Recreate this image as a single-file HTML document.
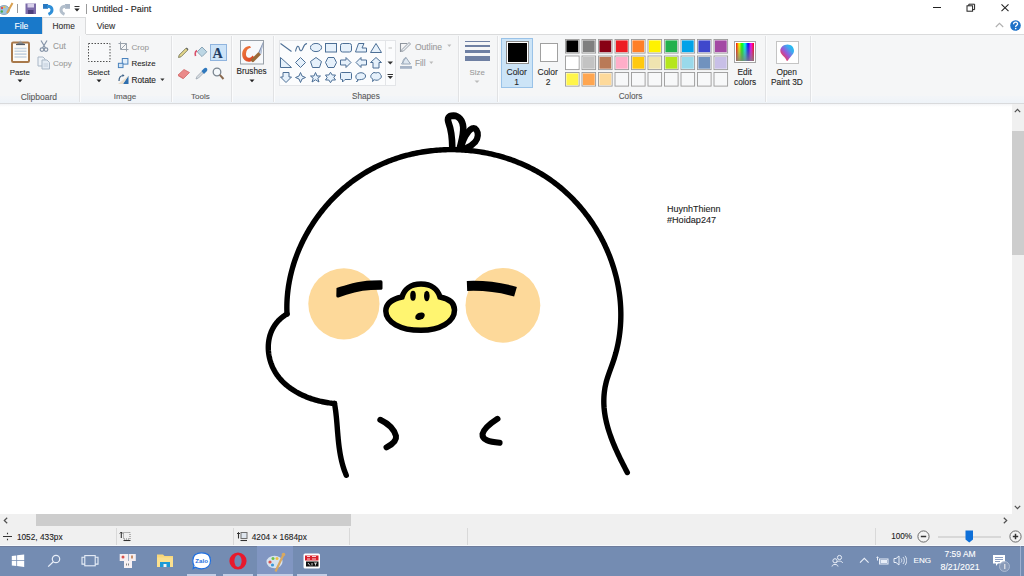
<!DOCTYPE html>
<html><head><meta charset="utf-8">
<style>
*{margin:0;padding:0;box-sizing:border-box}
html,body{width:1024px;height:576px;overflow:hidden;background:#fff;font-family:"Liberation Sans",sans-serif;color:#222}
.a{position:absolute}
.t{position:absolute;white-space:nowrap;line-height:1;-webkit-text-stroke:0.1px currentColor}
.sw{position:absolute;width:14.5px;height:14.5px;border:0.8px solid #959595;}
.sw i{position:absolute;left:0.5px;top:0.5px;right:0.5px;bottom:0.5px;display:block}
.vs{position:absolute;top:36px;width:1px;height:66px;background:#e1e2e4;box-shadow:1px 0 0 #fbfcfd}
</style></head><body>
<div class="a" style="left:0;top:0;width:1024px;height:17px;background:#fff"></div>
<div class="a" style="left:0;top:17px;width:42px;height:17px;background:#1979ca"></div>
<div class="a" style="left:42px;top:17px;width:44px;height:18px;background:#f5f6f7;border:1px solid #dadbdc;border-bottom:none"></div>
<div class="a" style="left:0;top:34px;width:1024px;height:69px;background:#f5f6f7"></div>
<div class="a" style="left:86px;top:34px;width:938px;height:1px;background:#dadbdc"></div>
<div class="a" style="left:43px;top:18px;width:42px;height:17px;background:#f5f6f7"></div>
<div class="a" style="left:0;top:96px;width:1024px;height:7px;background:linear-gradient(#f3f5f8,#eef3f8)"></div>
<div class="a" style="left:0;top:103px;width:1024px;height:1px;background:#d9dadc"></div>
<div class="a" style="left:0;top:104px;width:1012px;height:3px;background:linear-gradient(#f6f7f8,#fff)"></div>
<div class="vs" style="left:79px"></div>
<div class="vs" style="left:171px"></div>
<div class="vs" style="left:231px"></div>
<div class="vs" style="left:273px"></div>
<div class="vs" style="left:458px"></div>
<div class="vs" style="left:497px"></div>
<div class="vs" style="left:765px"></div>
<div class="vs" style="left:810px"></div>
<div class="a" style="left:501px;top:38px;width:32px;height:50px;background:#cce4f7;border:1px solid #99c2e8"></div>
<div class="a" style="left:506px;top:41px;width:23px;height:23px;border:1px solid #8c8c8c;background:#fff"></div>
<div class="a" style="left:508px;top:43px;width:19px;height:19px;background:#000"></div>
<div class="a" style="left:540px;top:43px;width:18px;height:19px;border:1px solid #a0a0a0;background:#fff"></div>
<svg class="a" style="left:565px;top:39.3px" width="170" height="50" viewBox="0 0 170 50"><rect x="0.50" y="0.50" width="13.6" height="13.6" fill="#fff" stroke="#9a9a9a" stroke-width="0.9"/><rect x="1.40" y="1.40" width="11.8" height="11.8" fill="#000000"/><rect x="17.00" y="0.50" width="13.6" height="13.6" fill="#fff" stroke="#9a9a9a" stroke-width="0.9"/><rect x="17.90" y="1.40" width="11.8" height="11.8" fill="#7f7f7f"/><rect x="33.50" y="0.50" width="13.6" height="13.6" fill="#fff" stroke="#9a9a9a" stroke-width="0.9"/><rect x="34.40" y="1.40" width="11.8" height="11.8" fill="#880015"/><rect x="50.00" y="0.50" width="13.6" height="13.6" fill="#fff" stroke="#9a9a9a" stroke-width="0.9"/><rect x="50.90" y="1.40" width="11.8" height="11.8" fill="#ed1c24"/><rect x="66.50" y="0.50" width="13.6" height="13.6" fill="#fff" stroke="#9a9a9a" stroke-width="0.9"/><rect x="67.40" y="1.40" width="11.8" height="11.8" fill="#ff7f27"/><rect x="83.00" y="0.50" width="13.6" height="13.6" fill="#fff" stroke="#9a9a9a" stroke-width="0.9"/><rect x="83.90" y="1.40" width="11.8" height="11.8" fill="#fff200"/><rect x="99.50" y="0.50" width="13.6" height="13.6" fill="#fff" stroke="#9a9a9a" stroke-width="0.9"/><rect x="100.40" y="1.40" width="11.8" height="11.8" fill="#22b14c"/><rect x="116.00" y="0.50" width="13.6" height="13.6" fill="#fff" stroke="#9a9a9a" stroke-width="0.9"/><rect x="116.90" y="1.40" width="11.8" height="11.8" fill="#00a2e8"/><rect x="132.50" y="0.50" width="13.6" height="13.6" fill="#fff" stroke="#9a9a9a" stroke-width="0.9"/><rect x="133.40" y="1.40" width="11.8" height="11.8" fill="#3f48cc"/><rect x="149.00" y="0.50" width="13.6" height="13.6" fill="#fff" stroke="#9a9a9a" stroke-width="0.9"/><rect x="149.90" y="1.40" width="11.8" height="11.8" fill="#a349a4"/><rect x="0.50" y="17.00" width="13.6" height="13.6" fill="#fff" stroke="#9a9a9a" stroke-width="0.9"/><rect x="1.40" y="17.90" width="11.8" height="11.8" fill="#ffffff"/><rect x="17.00" y="17.00" width="13.6" height="13.6" fill="#fff" stroke="#9a9a9a" stroke-width="0.9"/><rect x="17.90" y="17.90" width="11.8" height="11.8" fill="#c3c3c3"/><rect x="33.50" y="17.00" width="13.6" height="13.6" fill="#fff" stroke="#9a9a9a" stroke-width="0.9"/><rect x="34.40" y="17.90" width="11.8" height="11.8" fill="#b97a57"/><rect x="50.00" y="17.00" width="13.6" height="13.6" fill="#fff" stroke="#9a9a9a" stroke-width="0.9"/><rect x="50.90" y="17.90" width="11.8" height="11.8" fill="#ffaec9"/><rect x="66.50" y="17.00" width="13.6" height="13.6" fill="#fff" stroke="#9a9a9a" stroke-width="0.9"/><rect x="67.40" y="17.90" width="11.8" height="11.8" fill="#ffc90e"/><rect x="83.00" y="17.00" width="13.6" height="13.6" fill="#fff" stroke="#9a9a9a" stroke-width="0.9"/><rect x="83.90" y="17.90" width="11.8" height="11.8" fill="#efe4b0"/><rect x="99.50" y="17.00" width="13.6" height="13.6" fill="#fff" stroke="#9a9a9a" stroke-width="0.9"/><rect x="100.40" y="17.90" width="11.8" height="11.8" fill="#b5e61d"/><rect x="116.00" y="17.00" width="13.6" height="13.6" fill="#fff" stroke="#9a9a9a" stroke-width="0.9"/><rect x="116.90" y="17.90" width="11.8" height="11.8" fill="#99d9ea"/><rect x="132.50" y="17.00" width="13.6" height="13.6" fill="#fff" stroke="#9a9a9a" stroke-width="0.9"/><rect x="133.40" y="17.90" width="11.8" height="11.8" fill="#7092be"/><rect x="149.00" y="17.00" width="13.6" height="13.6" fill="#fff" stroke="#9a9a9a" stroke-width="0.9"/><rect x="149.90" y="17.90" width="11.8" height="11.8" fill="#c8bfe7"/><rect x="0.50" y="33.50" width="13.6" height="13.6" fill="#fff" stroke="#9a9a9a" stroke-width="0.9"/><rect x="1.40" y="34.40" width="11.8" height="11.8" fill="#fff54a"/><rect x="17.00" y="33.50" width="13.6" height="13.6" fill="#fff" stroke="#9a9a9a" stroke-width="0.9"/><rect x="17.90" y="34.40" width="11.8" height="11.8" fill="#ffa650"/><rect x="33.50" y="33.50" width="13.6" height="13.6" fill="#fff" stroke="#9a9a9a" stroke-width="0.9"/><rect x="34.40" y="34.40" width="11.8" height="11.8" fill="#fdd99a"/><rect x="50.00" y="33.50" width="13.6" height="13.6" fill="#f7f8f9" stroke="#9a9a9a" stroke-width="0.9"/><rect x="66.50" y="33.50" width="13.6" height="13.6" fill="#f7f8f9" stroke="#9a9a9a" stroke-width="0.9"/><rect x="83.00" y="33.50" width="13.6" height="13.6" fill="#f7f8f9" stroke="#9a9a9a" stroke-width="0.9"/><rect x="99.50" y="33.50" width="13.6" height="13.6" fill="#f7f8f9" stroke="#9a9a9a" stroke-width="0.9"/><rect x="116.00" y="33.50" width="13.6" height="13.6" fill="#f7f8f9" stroke="#9a9a9a" stroke-width="0.9"/><rect x="132.50" y="33.50" width="13.6" height="13.6" fill="#f7f8f9" stroke="#9a9a9a" stroke-width="0.9"/><rect x="149.00" y="33.50" width="13.6" height="13.6" fill="#f7f8f9" stroke="#9a9a9a" stroke-width="0.9"/></svg>
<svg class="a" style="left:0px;top:2px;" width="14" height="13" viewBox="0 0 14 13"><ellipse cx="4" cy="8" rx="5.5" ry="4.5" fill="#9cc3de" stroke="#7d9ab3" stroke-width="0.8"/>
<circle cx="2" cy="6" r="1.2" fill="#e05050"/><circle cx="4.5" cy="5.2" r="1.1" fill="#f0c040"/><circle cx="1.8" cy="9.5" r="1.2" fill="#4aa84a"/>
<path d="M12.5 1 L7 11" stroke="#d9a050" stroke-width="2"/></svg>
<div class="a" style="left:17px;top:4px;width:1px;height:9px;background:#9a9a9a"></div>
<svg class="a" style="left:25px;top:3px;" width="12" height="11" viewBox="0 0 12 11"><rect x="0.5" y="0.5" width="10.5" height="10.5" fill="#7b6aa8"/><rect x="2.5" y="0.5" width="6.5" height="4" fill="#d8d0ea"/><rect x="3" y="7" width="5.5" height="4" fill="#4e3f7a"/></svg>
<svg class="a" style="left:42px;top:2px;" width="13" height="14" viewBox="0 0 13 14"><path d="M1 2 H6 L6 6.8 H1 Z" fill="#2a78c0"/><path d="M5 4.3 C8.5 4.3 10 6 10 8 C10 10 8.8 11.3 6.5 12.3" fill="none" stroke="#2f8fd8" stroke-width="3"/></svg>
<svg class="a" style="left:58px;top:2px;" width="13" height="14" viewBox="0 0 13 14"><path d="M12 2 H7 L7 6.8 H12 Z" fill="#a9b6c6"/><path d="M8 4.3 C4.5 4.3 3 6 3 8 C3 10 4.2 11.3 6.5 12.3" fill="none" stroke="#b3bfcc" stroke-width="3"/></svg>
<svg class="a" style="left:74px;top:6px;" width="7" height="7" viewBox="0 0 7 7"><rect x="0.5" y="0" width="5" height="1" fill="#333"/><path d="M0.3 2.5 L5.7 2.5 L3 5.5 Z" fill="#222"/></svg>
<div class="a" style="left:86px;top:4px;width:1px;height:10px;background:#9a9a9a"></div>
<div class="a" style="left:933px;top:7px;width:8px;height:1px;background:#222"></div>
<svg class="a" style="left:966px;top:3px;" width="10" height="9" viewBox="0 0 10 9"><rect x="1" y="2.8" width="5.6" height="5.4" fill="none" stroke="#222" stroke-width="1"/><path d="M2.8 2.8 V1.2 H8.6 V6.6 H6.6" fill="none" stroke="#222" stroke-width="1"/></svg>
<svg class="a" style="left:1000px;top:3px;" width="10" height="10" viewBox="0 0 10 10"><path d="M1.5 1.3 L8.5 8.2 M8.5 1.3 L1.5 8.2" stroke="#222" stroke-width="1.05"/></svg>
<svg class="a" style="left:995px;top:22px;" width="9" height="6" viewBox="0 0 9 6"><path d="M0.8 5 L4.5 1.3 L8.2 5" fill="none" stroke="#b0b0b0" stroke-width="1.1"/></svg>
<svg class="a" style="left:1010px;top:20px;" width="12" height="12" viewBox="0 0 12 12"><circle cx="5.5" cy="5.5" r="5.3" fill="#1e72c8"/><path d="M3.6 4.2 C3.6 2.8 4.4 2.2 5.6 2.2 C6.8 2.2 7.6 2.9 7.6 4 C7.6 5.2 6 5.4 5.7 6.6 L5.7 7" fill="none" stroke="#fff" stroke-width="1.3"/><circle cx="5.7" cy="8.6" r="0.8" fill="#fff"/></svg>
<svg class="a" style="left:10px;top:39px;" width="21" height="25" viewBox="0 0 21 25"><rect x="2" y="3.5" width="17" height="19.5" rx="1.2" fill="#fdfbf7" stroke="#a8794b" stroke-width="2"/>
<path d="M4.5 9.5 H16.5 M4.5 12.3 H16.5 M4.5 15.1 H16.5 M4.5 18 H16.5" stroke="#c8d5e2" stroke-width="1.6"/>
<path d="M6.5 5.3 H14.5 L11.5 2.8 H9.5 Z" fill="#8a8a8a"/><rect x="6" y="4.8" width="9" height="1.3" fill="#505a66"/><path d="M9.3 2.8 L10.5 1.5 L11.7 2.8 Z" fill="#aaa"/></svg>
<svg class="a" style="left:39px;top:40px;" width="10" height="13" viewBox="0 0 10 13"><path d="M2 0.5 L6.5 8 M8 0.5 L3.5 8" stroke="#8795a8" stroke-width="1.2"/><circle cx="3" cy="9.6" r="1.8" fill="none" stroke="#8795a8" stroke-width="1.2"/><circle cx="7" cy="9.6" r="1.8" fill="none" stroke="#8795a8" stroke-width="1.2"/></svg>
<svg class="a" style="left:37px;top:56px;" width="14" height="14" viewBox="0 0 14 14"><path d="M1 1 H6 L8 3 V10 H1 Z" fill="#eef3f8" stroke="#a9b7c6" stroke-width="1"/><path d="M5 4 H10 L12.5 6.5 V13 H5 Z" fill="#e4ecf4" stroke="#a9b7c6" stroke-width="1"/><path d="M6.5 8 H11 M6.5 10 H11" stroke="#b9c6d4" stroke-width="0.8"/></svg>
<svg class="a" style="left:87px;top:42px;" width="25" height="21" viewBox="0 0 25 21"><rect x="1.5" y="1.5" width="21.5" height="18" fill="#f8f9fa" stroke="#505050" stroke-width="1" stroke-dasharray="1.5 1.5"/></svg>
<svg class="a" style="left:17px;top:79px;" width="6" height="4" viewBox="0 0 6 4"><path d="M0.5 0.5 H5.5 L3 3.3 Z" fill="#222"/></svg>
<svg class="a" style="left:95.6px;top:79px;" width="6" height="4" viewBox="0 0 6 4"><path d="M0.5 0.5 H5.5 L3 3.3 Z" fill="#222"/></svg>
<svg class="a" style="left:248.6px;top:79.4px;" width="6" height="4" viewBox="0 0 6 4"><path d="M0.5 0.5 H5.5 L3 3.3 Z" fill="#222"/></svg>
<svg class="a" style="left:159.5px;top:77.5px;" width="5" height="4" viewBox="0 0 5 4"><path d="M0.3 0.6 H4.5 L2.4 3 Z" fill="#333"/></svg>
<svg class="a" style="left:118px;top:41px;" width="11" height="11" viewBox="0 0 11 11"><path d="M2.5 0.5 V8.5 H10.5 M0.5 2.5 H8.5 V10.5 M3 8 L8.5 2.5" fill="none" stroke="#9aa3ad" stroke-width="1"/></svg>
<svg class="a" style="left:117px;top:57px;" width="12" height="12" viewBox="0 0 12 12"><rect x="5.3" y="1.5" width="5.6" height="5.6" fill="#e3effa" stroke="#4a82bd" stroke-width="1"/><rect x="1.4" y="6.3" width="4.6" height="4.3" fill="#d5e6f6" stroke="#4a82bd" stroke-width="1"/></svg>
<svg class="a" style="left:117px;top:74px;" width="13" height="11" viewBox="0 0 13 11"><path d="M6 10 L11.5 10 L11.5 1.8 Z" fill="#2f6fae"/><path d="M1 10 L6 10 L11.5 1.8 Z" fill="#e8d8c0" opacity="0.8"/><path d="M2 7 C2 3 4 1.5 6.5 1.5" fill="none" stroke="#3b5f85" stroke-width="1.2"/><path d="M5.5 0 L7.5 1.5 L5.5 3" fill="#3b5f85"/></svg>
<svg class="a" style="left:177px;top:47px;" width="12" height="12" viewBox="0 0 12 12"><path d="M1.5 10.5 L2.2 8 L9 1.2 L10.8 3 L4 9.8 Z" fill="#e4d78a" stroke="#7a7a5a" stroke-width="0.9"/><path d="M9 1.2 L10.8 3 L11.5 2.3 L9.7 0.5 Z" fill="#555"/></svg>
<svg class="a" style="left:194px;top:46px;" width="14" height="13" viewBox="0 0 14 13"><path d="M8 1 L12.8 5.8 L8 10.6 L3.2 5.8 Z" fill="#bcd6e4" stroke="#8aa6b8" stroke-width="1"/><path d="M3 4.5 C1 5.5 1 8 1.6 10" fill="none" stroke="#d9506a" stroke-width="1.6"/></svg>
<div class="a" style="left:210px;top:44px;width:16.5px;height:16.5px;background:#cce3f8;border:1px solid #90b4de"></div>
<div class="t" style="left:212.5px;top:46.3px;font-family:'Liberation Serif',serif;font-weight:bold;font-size:14.2px;color:#1f3b63">A</div>
<svg class="a" style="left:177px;top:68px;" width="14" height="12" viewBox="0 0 14 12"><path d="M1 7 L7 1.5 L12.5 4.5 L6.5 10.5 Z" fill="#ea8a8a" stroke="#d26a6a" stroke-width="0.8"/><path d="M1 7 L6.5 10.5 L6 11 L1 8 Z" fill="#d86a6a"/></svg>
<svg class="a" style="left:195px;top:67px;" width="13" height="13" viewBox="0 0 13 13"><path d="M1 12 L2 9.5 L7 4.5 L8.5 6 L3.5 11 Z" fill="#d8dde2" stroke="#9aa5b0" stroke-width="0.8"/><path d="M6.5 4 L9 1.5 C10 0.5 11.5 0.5 12 1.5 C12.5 2.5 12.5 3.5 11.5 4.5 L9 7 Z" fill="#2f78bd"/></svg>
<svg class="a" style="left:212px;top:67px;" width="13" height="14" viewBox="0 0 13 14"><circle cx="5" cy="5" r="3.8" fill="#f4f8fb" stroke="#7a8590" stroke-width="1.3"/><path d="M7.8 7.8 L11.5 12" stroke="#8a6a50" stroke-width="2"/></svg>
<svg class="a" style="left:240px;top:40px;" width="25" height="25" viewBox="0 0 25 25"><rect x="0.5" y="0.5" width="23" height="23.5" fill="#f7f9fb" stroke="#98a0a8" stroke-width="1"/>
<defs><linearGradient id="br" x1="0" y1="0" x2="1" y2="1"><stop offset="0" stop-color="#f08040"/><stop offset="1" stop-color="#d83a20"/></linearGradient></defs>
<path d="M10 6 C5 6 1.8 10 2.2 15 C2.6 19.5 6 22.5 10.5 21.5 C12.5 21 14 19.5 15 18 L12.5 15.5 C11.5 17 10 18 8.5 17.8 C6.5 17.5 5.8 15.5 6 13.5 C6.3 10 8.5 8 11 7.8 Z" fill="url(#br)"/>
<path d="M11 19.5 L18.5 12 L21 14.5 L13.5 22 C12.5 22.5 11 21.5 11 19.5 Z" fill="#9a6a38"/>
<path d="M18.5 12 L23 2 L23.3 2.5 L21 14.5 Z" fill="#7f8fae"/><path d="M19.5 12.8 L23 3 L21 14.5 Z" fill="#c0cce0"/></svg>
<div class="a" style="left:279px;top:40px;width:117px;height:46px;background:#fbfcfd;border:1px solid #e3e5e8"></div>
<div class="a" style="left:385px;top:40px;width:1px;height:46px;background:#e3e5e8"></div>
<svg class="a" style="left:280px;top:43px;" width="13" height="12" viewBox="0 0 13 12"><path d="M0.5 0.5 L11.5 8.5" stroke="#4c6f96" stroke-width="1.1"/></svg>
<svg class="a" style="left:295px;top:43px;" width="13" height="12" viewBox="0 0 13 12"><path d="M0.5 8.5 C2 2 3.5 2 4.5 6 C5.5 9 7 8 8 5 C9 2 10 1 12 0.5" fill="none" stroke="#4c6f96" stroke-width="1.1"/></svg>
<svg class="a" style="left:310px;top:43px;" width="13" height="12" viewBox="0 0 13 12"><ellipse cx="6" cy="4.5" rx="5.6" ry="4.1" fill="#e6f1fb" stroke="#4c6f96" stroke-width="1"/></svg>
<svg class="a" style="left:325px;top:43px;" width="13" height="12" viewBox="0 0 13 12"><rect x="0.5" y="0.5" width="11" height="8.5" fill="#e6f1fb" stroke="#4c6f96" stroke-width="1"/></svg>
<svg class="a" style="left:340px;top:43px;" width="13" height="12" viewBox="0 0 13 12"><rect x="0.5" y="0.5" width="11" height="8.5" rx="2" fill="#e6f1fb" stroke="#4c6f96" stroke-width="1"/></svg>
<svg class="a" style="left:355px;top:43px;" width="13" height="12" viewBox="0 0 13 12"><path d="M3.5 0.5 H9 L7 5 H11.5 V9 H0.5 Z" fill="#e6f1fb" stroke="#4c6f96" stroke-width="1"/></svg>
<svg class="a" style="left:370px;top:43px;" width="13" height="12" viewBox="0 0 13 12"><path d="M6 0.5 L11.5 9.5 H0.5 Z" fill="#e6f1fb" stroke="#4c6f96" stroke-width="1"/></svg>
<svg class="a" style="left:280px;top:57px;" width="13" height="12" viewBox="0 0 13 12"><path d="M0.5 0.5 V10.5 H11.5 Z" fill="#e6f1fb" stroke="#4c6f96" stroke-width="1"/></svg>
<svg class="a" style="left:295px;top:57px;" width="13" height="12" viewBox="0 0 13 12"><path d="M5.5 0.5 L10.5 5.5 L5.5 10.5 L0.5 5.5 Z" fill="#e6f1fb" stroke="#4c6f96" stroke-width="1"/></svg>
<svg class="a" style="left:310px;top:57px;" width="13" height="12" viewBox="0 0 13 12"><path d="M6 0.5 L11.5 4.5 L9.5 10.5 H2.5 L0.5 4.5 Z" fill="#e6f1fb" stroke="#4c6f96" stroke-width="1"/></svg>
<svg class="a" style="left:325px;top:57px;" width="13" height="12" viewBox="0 0 13 12"><path d="M3 0.5 H9 L11.5 5.5 L9 10.5 H3 L0.5 5.5 Z" fill="#e6f1fb" stroke="#4c6f96" stroke-width="1"/></svg>
<svg class="a" style="left:340px;top:57px;" width="13" height="12" viewBox="0 0 13 12"><path d="M0.5 3 H6 V0.5 L11 5.5 L6 10.5 V8 H0.5 Z" fill="#e6f1fb" stroke="#4c6f96" stroke-width="1"/></svg>
<svg class="a" style="left:355px;top:57px;" width="13" height="12" viewBox="0 0 13 12"><path d="M11.5 3 H6 V0.5 L1 5.5 L6 10.5 V8 H11.5 Z" fill="#e6f1fb" stroke="#4c6f96" stroke-width="1"/></svg>
<svg class="a" style="left:370px;top:57px;" width="13" height="12" viewBox="0 0 13 12"><path d="M3 11 V5.5 H0.5 L6 0.5 L11.5 5.5 H9 V11 Z" fill="#e6f1fb" stroke="#4c6f96" stroke-width="1"/></svg>
<svg class="a" style="left:280px;top:72px;" width="13" height="12" viewBox="0 0 13 12"><path d="M3 0.5 V5 H0.5 L6 10.5 L11.5 5 H9 V0.5 Z" fill="#e6f1fb" stroke="#4c6f96" stroke-width="1"/></svg>
<svg class="a" style="left:295px;top:72px;" width="13" height="12" viewBox="0 0 13 12"><path d="M5.5 0.5 L7 4 L10.5 5.5 L7 7 L5.5 10.5 L4 7 L0.5 5.5 L4 4 Z" fill="#e6f1fb" stroke="#4c6f96" stroke-width="1"/></svg>
<svg class="a" style="left:310px;top:72px;" width="13" height="12" viewBox="0 0 13 12"><path d="M5.5 0.5 L7 4 L10.5 4 L7.8 6.3 L9 10 L5.5 7.8 L2 10 L3.2 6.3 L0.5 4 L4 4 Z" fill="#e6f1fb" stroke="#4c6f96" stroke-width="1"/></svg>
<svg class="a" style="left:325px;top:72px;" width="13" height="12" viewBox="0 0 13 12"><path d="M5.5 0.3 L7.2 3 L10.5 3 L8.8 5.5 L10.5 8 L7.2 8 L5.5 10.7 L3.8 8 L0.5 8 L2.2 5.5 L0.5 3 L3.8 3 Z" fill="#e6f1fb" stroke="#4c6f96" stroke-width="1"/></svg>
<svg class="a" style="left:340px;top:72px;" width="13" height="12" viewBox="0 0 13 12"><path d="M1.5 0.5 H10.5 Q11.5 0.5 11.5 1.5 V6.5 Q11.5 7.5 10.5 7.5 H5 L2.5 10 V7.5 H1.5 Q0.5 7.5 0.5 6.5 V1.5 Q0.5 0.5 1.5 0.5 Z" fill="#e6f1fb" stroke="#4c6f96" stroke-width="1"/></svg>
<svg class="a" style="left:355px;top:72px;" width="13" height="12" viewBox="0 0 13 12"><path d="M3 8 C-0.5 6.5 0 1 6 0.7 C12 1 12 7 6.5 7.5 C5 7.7 4 7.8 3 7.8 L1.5 10 Z" fill="#e6f1fb" stroke="#4c6f96" stroke-width="1"/></svg>
<svg class="a" style="left:370px;top:72px;" width="13" height="12" viewBox="0 0 13 12"><path d="M2 2 C3 0 5 0.5 6 1 C8 0 10 0.5 10.5 2.5 C12 4 11.5 6.5 9.5 7 C8.5 8.5 6 8.5 4.5 7.8 L2.5 9.5 L3 7 C0.5 6.5 0 3.5 2 2 Z" fill="#e6f1fb" stroke="#4c6f96" stroke-width="1"/></svg>
<svg class="a" style="left:387px;top:46px;" width="7" height="4" viewBox="0 0 7 4"><rect x="1.5" y="1.5" width="3.5" height="1" fill="#c0c0c0"/></svg>
<svg class="a" style="left:387px;top:61px;" width="7" height="4" viewBox="0 0 7 4"><path d="M0.5 0.5 H6 L3.25 3.5 Z" fill="#333"/></svg>
<svg class="a" style="left:387px;top:74px;" width="7" height="6" viewBox="0 0 7 6"><rect x="0.5" y="0" width="5.5" height="1" fill="#333"/><path d="M0.5 2 H6 L3.25 5 Z" fill="#333"/></svg>
<svg class="a" style="left:399px;top:41px;" width="14" height="13" viewBox="0 0 14 13"><path d="M1.5 11 V2.5 H8" fill="none" stroke="#8e959e" stroke-width="1.1"/><path d="M2.5 10.5 L3 8.5 L10 1.5 L11.5 3 L4.5 10 Z" fill="#e8edf2" stroke="#8e959e" stroke-width="0.9"/></svg>
<svg class="a" style="left:399px;top:56px;" width="14" height="14" viewBox="0 0 14 14"><path d="M7 1.5 L11.5 8 H2.5 Z" fill="#dfe8f1" stroke="#9aa8b8" stroke-width="1"/><path d="M4.5 7.5 C3 5 5 2 7 1.5" fill="none" stroke="#9aa8b8" stroke-width="1"/><rect x="1" y="10" width="12" height="2.8" fill="#a7b4c6"/></svg>
<svg class="a" style="left:447px;top:44px;" width="5" height="4" viewBox="0 0 5 4"><path d="M0.3 0.5 H4.3 L2.3 3 Z" fill="#bbb"/></svg>
<svg class="a" style="left:429px;top:61px;" width="5" height="4" viewBox="0 0 5 4"><path d="M0.3 0.5 H4.3 L2.3 3 Z" fill="#bbb"/></svg>
<svg class="a" style="left:474px;top:80px;" width="6" height="4" viewBox="0 0 6 4"><path d="M0.5 0.5 H5.5 L3 3 Z" fill="#bbb"/></svg>
<div class="a" style="left:465px;top:41px;width:24.5px;height:1px;background:#6f80a3"></div>
<div class="a" style="left:465px;top:45px;width:24.5px;height:1.5px;background:#6f80a3"></div>
<div class="a" style="left:465px;top:50.3px;width:24.5px;height:2.6px;background:#6f80a3"></div>
<div class="a" style="left:465px;top:56px;width:24.5px;height:5.3px;background:#6f80a3"></div>
<div class="a" style="left:734px;top:41px;width:21.5px;height:21.5px;border:1px solid #a4a4a4;background:#fff;padding:0.8px"><div style="width:100%;height:100%;background:linear-gradient(to bottom,rgba(128,128,128,0) 0%,rgba(128,128,128,0.85) 100%),linear-gradient(to right,#f00 0%,#ff0 17%,#0f0 33%,#0ff 50%,#00f 67%,#f0f 83%,#f00 100%)"></div></div>
<div class="a" style="left:776px;top:41px;width:22.5px;height:22.5px;border:1px solid #c4c4c4;background:#fff"></div>
<svg class="a" style="left:779px;top:44px;" width="17" height="18" viewBox="0 0 17 18"><defs><linearGradient id="p3" x1="1" y1="0" x2="0" y2="1"><stop offset="0" stop-color="#10d0f0"/><stop offset="0.3" stop-color="#40a8f0"/><stop offset="0.55" stop-color="#9a58d8"/><stop offset="0.8" stop-color="#f03a5a"/><stop offset="1" stop-color="#ffb020"/></linearGradient></defs>
<path d="M8.5 0.5 C12.5 0.5 15 3.4 15 6.8 C15 10.5 11.5 12 8.8 16.8 L7.6 16.8 C7 13 1.3 11 1.3 6.8 C1.3 3.4 4.5 0.5 8.5 0.5 Z" fill="url(#p3)"/></svg>
<div class="a" style="left:0;top:104px;width:1012px;height:410px;background:linear-gradient(#f4f5f7 0px,#fff 3px)"></div>
<div class="a" style="left:0;top:0;width:1012px;height:514px;overflow:hidden"><svg class="a" style="left:0;top:0" width="1024" height="576" viewBox="0 0 1024 576">
<circle cx="343.9" cy="303.8" r="35.6" fill="#fdd99a"/>
<circle cx="502.9" cy="305.3" r="37.4" fill="#fdd99a"/>
<g fill="none" stroke="#000" stroke-width="5.4" stroke-linecap="round" stroke-linejoin="round">
<path d="M 287.00 314.00 L 286.93 312.19 L 286.88 310.38 L 286.85 308.57 L 286.85 306.77 L 286.88 304.96 L 286.93 303.16 L 287.00 301.35 L 287.09 299.55 L 287.21 297.75 L 287.35 295.95 L 287.51 294.16 L 287.69 292.36 L 287.90 290.57 L 288.13 288.79 L 288.39 287.00 L 288.66 285.22 L 288.96 283.44 L 289.27 281.66 L 289.61 279.89 L 289.98 278.13 L 290.36 276.36 L 290.76 274.60 L 291.19 272.85 L 291.63 271.10 L 292.10 269.35 L 292.59 267.61 L 293.10 265.88 L 293.62 264.15 L 294.17 262.43 L 294.74 260.71 L 295.33 259.00 L 295.94 257.29 L 296.56 255.60 L 297.21 253.90 L 297.88 252.22 L 298.56 250.54 L 299.27 248.87 L 299.99 247.21 L 300.74 245.55 L 301.50 243.91 L 302.28 242.27 L 303.07 240.64 L 303.89 239.01 L 304.72 237.40 L 305.58 235.79 L 306.45 234.20 L 307.33 232.61 L 308.24 231.03 L 309.16 229.47 L 310.10 227.91 L 311.06 226.36 L 312.03 224.82 L 313.02 223.30 L 314.02 221.78 L 315.05 220.27 L 316.09 218.78 L 317.14 217.30 L 318.21 215.82 L 319.30 214.36 L 320.40 212.92 L 321.52 211.48 L 322.66 210.05 L 323.80 208.64 L 324.97 207.24 L 326.15 205.86 L 327.34 204.48 L 328.55 203.12 L 329.77 201.78 L 331.01 200.44 L 332.26 199.12 L 333.53 197.82 L 334.81 196.53 L 336.11 195.25 L 337.41 193.99 L 338.73 192.74 L 340.07 191.50 L 341.42 190.29 L 342.78 189.08 L 344.15 187.90 L 345.54 186.73 L 346.94 185.57 L 348.35 184.43 L 349.77 183.31 L 351.21 182.20 L 352.66 181.11 L 354.12 180.04 L 355.59 178.99 L 357.08 177.95 L 358.57 176.93 L 360.08 175.93 L 361.60 174.94 L 363.13 173.97 L 364.67 173.03 L 366.22 172.10 L 367.78 171.18 L 369.35 170.29 L 370.94 169.42 L 372.53 168.56 L 374.13 167.73 L 375.75 166.91 L 377.37 166.12 L 379.00 165.34 L 380.64 164.58 L 382.29 163.84 L 383.95 163.12 L 385.61 162.42 L 387.29 161.73 L 388.97 161.07 L 390.66 160.42 L 392.36 159.80 L 394.06 159.19 L 395.77 158.60 L 397.49 158.03 L 399.22 157.48 L 400.95 156.95 L 402.69 156.43 L 404.44 155.94 L 406.19 155.46 L 407.94 155.01 L 409.70 154.57 L 411.47 154.15 L 413.24 153.75 L 415.02 153.37 L 416.80 153.00 L 418.58 152.66 L 420.37 152.33 L 422.17 152.02 L 423.96 151.73 L 425.76 151.46 L 427.57 151.21 L 429.37 150.98 L 431.18 150.76 L 432.99 150.57 L 434.81 150.39 L 436.62 150.23 L 438.44 150.09 L 440.26 149.97 L 442.08 149.86 L 443.91 149.78 L 445.73 149.71 L 447.55 149.66 L 449.38 149.63 L 451.20 149.62 L 453.03 149.63 L 454.86 149.65 L 456.68 149.70 L 458.51 149.76 L 460.33 149.84 L 462.15 149.94 L 463.98 150.05 L 465.80 150.19 L 467.62 150.34 L 469.44 150.51 L 471.25 150.70 L 473.06 150.91 L 474.88 151.13 L 476.68 151.38 L 478.49 151.64 L 480.29 151.92 L 482.09 152.22 L 483.89 152.53 L 485.68 152.87 L 487.47 153.22 L 489.25 153.59 L 491.03 153.98 L 492.81 154.38 L 494.58 154.81 L 496.34 155.25 L 498.10 155.71 L 499.86 156.19 L 501.61 156.68 L 503.35 157.20 L 505.09 157.73 L 506.82 158.28 L 508.54 158.85 L 510.26 159.43 L 511.97 160.04 L 513.67 160.66 L 515.37 161.30 L 517.06 161.95 L 518.74 162.63 L 520.41 163.32 L 522.07 164.03 L 523.73 164.76 L 525.38 165.50 L 527.01 166.26 L 528.64 167.04 L 530.26 167.84 L 531.87 168.66 L 533.47 169.49 L 535.06 170.34 L 536.64 171.21 L 538.21 172.10 L 539.77 173.00 L 541.32 173.92 L 542.86 174.86 L 544.38 175.82 L 545.90 176.79 L 547.40 177.78 L 548.89 178.79 L 550.37 179.81 L 551.83 180.86 L 553.29 181.92 L 554.73 182.99 L 556.16 184.09 L 557.58 185.20 L 558.98 186.32 L 560.37 187.46 L 561.75 188.62 L 563.11 189.79 L 564.47 190.98 L 565.81 192.18 L 567.13 193.40 L 568.44 194.64 L 569.74 195.88 L 571.03 197.14 L 572.30 198.42 L 573.55 199.71 L 574.80 201.02 L 576.03 202.33 L 577.24 203.67 L 578.44 205.01 L 579.63 206.37 L 580.80 207.74 L 581.96 209.12 L 583.10 210.52 L 584.23 211.93 L 585.34 213.35 L 586.44 214.78 L 587.52 216.22 L 588.59 217.68 L 589.64 219.15 L 590.68 220.62 L 591.70 222.11 L 592.71 223.61 L 593.70 225.12 L 594.67 226.65 L 595.63 228.18 L 596.57 229.72 L 597.50 231.27 L 598.41 232.83 L 599.30 234.40 L 600.18 235.98 L 601.04 237.57 L 601.88 239.17 L 602.71 240.78 L 603.51 242.39 L 604.31 244.01 L 605.08 245.65 L 605.84 247.29 L 606.58 248.93 L 607.30 250.59 L 608.01 252.25 L 608.70 253.92 L 609.37 255.60 L 610.02 257.28 L 610.66 258.97 L 611.27 260.67 L 611.87 262.37 L 612.45 264.08 L 613.01 265.80 L 613.56 267.52 L 614.08 269.24 L 614.59 270.97 L 615.07 272.71 L 615.54 274.45 L 615.99 276.20 L 616.42 277.95 L 616.83 279.70 L 617.22 281.46 L 617.59 283.23 L 617.95 284.99 L 618.28 286.76 L 618.59 288.54 L 618.88 290.32 L 619.16 292.10 L 619.41 293.88 L 619.64 295.67 L 619.86 297.45 L 620.05 299.25 L 620.22 301.04 L 620.37 302.83 L 620.50 304.63 L 620.61 306.43 L 620.70 308.23 L 620.76 310.03 L 620.81 311.83 L 620.84 313.63 L 620.84 315.43 L 620.82 317.24 L 620.78 319.04 L 620.72 320.84 L 620.64 322.65 L 620.53 324.45 L 620.41 326.25 L 620.26 328.05 L 620.09 329.85 L 619.89 331.65 L 619.68 333.45 L 619.44 335.25 L 619.18 337.04 L 618.90 338.83 L 618.59 340.62 L 618.26 342.41 L 617.91 344.20 L 617.53 345.98 L 617.13 347.76 L 616.71 349.54 L 616.26 351.32 L 615.80 353.09 L 615.30 354.85 L 614.79 356.62 L 614.25 358.38 L 613.68 360.13 L 613.09 361.88 L 612.48 363.63 L 611.86 365.37 L 611.23 367.12 L 610.59 368.86 L 609.96 370.59 L 609.33 372.33 L 608.72 374.07 L 608.12 375.82 L 607.55 377.56 L 607.02 379.31 L 606.51 381.06 L 606.05 382.81 L 605.64 384.57 L 605.26 386.34 L 604.93 388.11 L 604.65 389.88 L 604.41 391.65 L 604.21 393.43 L 604.05 395.22 L 603.93 397.00 L 603.86 398.79 L 603.82 400.58 L 603.83 402.37 L 603.87 404.16 L 603.96 405.96 L 604.08 407.75 L 604.25 409.55 L 604.45 411.34 L 604.69 413.14 L 604.96 414.93 L 605.27 416.72 L 605.61 418.51 L 605.99 420.30 L 606.40 422.09 L 606.83 423.87 L 607.30 425.65 L 607.79 427.43 L 608.31 429.20 L 608.86 430.97 L 609.43 432.73 L 610.02 434.49 L 610.64 436.24 L 611.27 437.99 L 611.93 439.73 L 612.60 441.46 L 613.29 443.19 L 614.00 444.90 L 614.72 446.61 L 615.46 448.31 L 616.20 450.00 L 616.96 451.69 L 617.73 453.36 L 618.51 455.02 L 619.29 456.67 L 620.08 458.31 L 620.88 459.94 L 621.68 461.56 L 622.48 463.16 L 623.29 464.75 L 624.10 466.33 L 624.90 467.89 L 625.70 469.44 L 626.50 470.98 L 627.30 472.50"/>
<path d="M 287.00 314.00 L 285.70 314.78 L 284.44 315.60 L 283.24 316.46 L 282.08 317.34 L 280.98 318.26 L 279.92 319.21 L 278.91 320.19 L 277.95 321.20 L 277.04 322.24 L 276.18 323.30 L 275.36 324.39 L 274.59 325.50 L 273.87 326.63 L 273.19 327.79 L 272.56 328.97 L 271.97 330.16 L 271.43 331.37 L 270.93 332.60 L 270.48 333.85 L 270.07 335.11 L 269.70 336.38 L 269.38 337.66 L 269.10 338.96 L 268.86 340.27 L 268.66 341.58 L 268.51 342.90 L 268.39 344.23 L 268.32 345.56 L 268.29 346.90 L 268.29 348.23 L 268.34 349.57 L 268.42 350.92 L 268.55 352.25 L 268.71 353.59 L 268.91 354.93 L 269.15 356.26 L 269.43 357.58 L 269.74 358.90 L 270.09 360.21 L 270.47 361.51 L 270.89 362.79 L 271.35 364.07 L 271.84 365.34 L 272.36 366.59 L 272.92 367.83 L 273.52 369.05 L 274.15 370.25 L 274.81 371.43 L 275.50 372.60 L 276.22 373.74 L 276.98 374.86 L 277.77 375.96 L 278.59 377.04 L 279.44 378.09 L 280.31 379.12 L 281.22 380.13 L 282.15 381.12 L 283.11 382.09 L 284.09 383.03 L 285.10 383.95 L 286.13 384.85 L 287.18 385.73 L 288.26 386.59 L 289.36 387.42 L 290.47 388.24 L 291.61 389.03 L 292.77 389.80 L 293.94 390.55 L 295.13 391.28 L 296.33 391.99 L 297.56 392.67 L 298.79 393.33 L 300.04 393.98 L 301.30 394.60 L 302.58 395.20 L 303.86 395.78 L 305.15 396.34 L 306.46 396.88 L 307.77 397.40 L 309.09 397.90 L 310.42 398.37 L 311.75 398.83 L 313.09 399.26 L 314.43 399.68 L 315.78 400.07 L 317.12 400.45 L 318.47 400.80 L 319.82 401.14 L 321.18 401.45 L 322.53 401.75 L 323.87 402.02 L 325.22 402.27 L 326.56 402.51 L 327.90 402.72 L 329.23 402.92 L 330.56 403.09 L 331.88 403.25 L 333.20 403.38 L 334.50 403.50"/>
<path d="M 334.50 403.50 L 334.76 404.94 L 334.99 406.38 L 335.22 407.82 L 335.42 409.27 L 335.62 410.73 L 335.80 412.19 L 335.98 413.65 L 336.14 415.12 L 336.29 416.59 L 336.44 418.06 L 336.58 419.54 L 336.71 421.02 L 336.84 422.50 L 336.97 423.98 L 337.09 425.46 L 337.21 426.95 L 337.32 428.44 L 337.44 429.92 L 337.56 431.41 L 337.68 432.90 L 337.81 434.39 L 337.93 435.88 L 338.07 437.37 L 338.20 438.86 L 338.35 440.35 L 338.50 441.83 L 338.67 443.32 L 338.84 444.80 L 339.02 446.28 L 339.21 447.77 L 339.42 449.24 L 339.64 450.72 L 339.87 452.19 L 340.12 453.66 L 340.38 455.13 L 340.66 456.59 L 340.96 458.05 L 341.28 459.51 L 341.61 460.96 L 341.97 462.41 L 342.35 463.85 L 342.75 465.29 L 343.17 466.72 L 343.62 468.15 L 344.09 469.57 L 344.59 470.99 L 345.12 472.40 L 345.67 473.80 L 346.25 475.20"/>
<path d="M 380.3 419.8 C 387 423 394 429 396 436 C 397 441 391 445 386.5 447.4" stroke-width="6"/>
<path d="M 497.5 418.8 C 491 423 484 428 482.5 434 C 482 440 489 442 499.6 442.7" stroke-width="6"/>
<path d="M 452.3 148 C 452.2 140 451.3 130 448.8 123.5 C 446.8 118 448.5 115.6 453.5 115.6 C 458.5 115.8 462.5 120 463.2 127 C 463.8 134 461.5 141 459.8 148" stroke-width="6.6"/>
<path d="M 461.5 146 C 463 140 467 131 472 128.5 C 476 127 478 131.5 477.8 135.5 C 477.5 141 473 145 467 147.5" stroke-width="6.2"/>
</g>
<path d="M 336.5 288 C 346 285 358 281 372 280.5 L 381 280.3 Q 382.5 280.5 382.5 282 L 382.5 288.5 Q 382.3 289.8 381 289.8 L 371 290 C 360 290.5 349 293.5 338.5 297.5 Q 336.5 298 336.3 296 Z" fill="#000"/>
<path d="M 467 286 Q 492 285 515.5 291.7" stroke="#000" stroke-width="10" fill="none" stroke-linecap="butt"/>
<path d="M 421 284 C 432 284 438 290 440 297 C 450 299 454.5 304 454.5 310 C 454.5 322 440 330.3 421 330.3 C 400 330.3 386 322 385.8 311 C 386 304 392 299 402 297 C 404 290 410 284 421 284 Z" fill="#fff570" stroke="#000" stroke-width="5.5"/>
<ellipse cx="413" cy="295.7" rx="2.8" ry="5" fill="#000"/>
<ellipse cx="426.8" cy="296" rx="2.8" ry="5.2" fill="#000"/>
<ellipse cx="420" cy="316.2" rx="5" ry="3.5" fill="#000" transform="rotate(-25 420 316.2)"/>
</svg></div>
<div class="a" style="left:1012px;top:104px;width:12px;height:410px;background:#f0f0f0"></div>
<div class="a" style="left:1012px;top:131px;width:12px;height:124px;background:#cdcdcd"></div>
<div class="a" style="left:0;top:514px;width:1024px;height:12px;background:#f0f0f0"></div>
<div class="a" style="left:35.6px;top:514px;width:315.2px;height:11.6px;background:#cdcdcd"></div>
<div class="a" style="left:0;top:526px;width:1024px;height:20px;background:#f0f0f0"></div>
<div class="a" style="left:116px;top:528px;width:1px;height:17px;background:#d9d9d9"></div>
<div class="a" style="left:233px;top:528px;width:1px;height:17px;background:#d9d9d9"></div>
<div class="a" style="left:349px;top:528px;width:1px;height:17px;background:#d9d9d9"></div>
<div class="a" style="left:467px;top:528px;width:1px;height:17px;background:#d9d9d9"></div>
<div class="a" style="left:875px;top:528px;width:1px;height:17px;background:#d9d9d9"></div>
<div class="a" style="left:0;top:546px;width:1024px;height:30px;background:#748cb2"></div>
<div class="a" style="left:0;top:545px;width:1024px;height:1px;background:#f7fafd"></div>
<div class="a" style="left:0;top:546px;width:1024px;height:1px;background:#6e7c9c"></div>
<svg class="a" style="left:1014px;top:108px;" width="7" height="5" viewBox="0 0 7 5"><path d="M0.8 4.2 L3.5 1.3 L6.2 4.2" fill="none" stroke="#505050" stroke-width="1.2"/></svg>
<svg class="a" style="left:1014px;top:505px;" width="7" height="5" viewBox="0 0 7 5"><path d="M0.8 0.8 L3.5 3.7 L6.2 0.8" fill="none" stroke="#505050" stroke-width="1.2"/></svg>
<svg class="a" style="left:3px;top:517px;" width="5" height="7" viewBox="0 0 5 7"><path d="M4.2 0.8 L1.3 3.5 L4.2 6.2" fill="none" stroke="#505050" stroke-width="1.2"/></svg>
<svg class="a" style="left:1003px;top:517px;" width="5" height="7" viewBox="0 0 5 7"><path d="M0.8 0.8 L3.7 3.5 L0.8 6.2" fill="none" stroke="#505050" stroke-width="1.2"/></svg>
<svg class="a" style="left:2px;top:532px;" width="11" height="9" viewBox="0 0 11 9"><path d="M1 4.5 H10 M5.5 0.8 V2.2 M5.5 6.8 V8.2" stroke="#333" stroke-width="1.1"/></svg>
<svg class="a" style="left:119px;top:531px;" width="13" height="11" viewBox="0 0 13 11"><path d="M2.3 1 V7" stroke="#333" stroke-width="1.1"/><path d="M0.8 2.5 L2.3 1 L3.8 2.5" fill="none" stroke="#333" stroke-width="1"/><rect x="4.5" y="1.5" width="6.5" height="6.5" fill="none" stroke="#666" stroke-width="0.9" stroke-dasharray="1 1"/><path d="M4.5 9.5 H11.5" stroke="#333" stroke-width="1.1"/></svg>
<svg class="a" style="left:236px;top:531px;" width="13" height="11" viewBox="0 0 13 11"><path d="M2.5 1.5 V7.5" stroke="#333" stroke-width="1.1"/><path d="M1 3 L2.5 1.5 L4 3" fill="none" stroke="#333" stroke-width="1"/><rect x="5" y="1.5" width="6" height="6" fill="#dfe6ee" stroke="#707070" stroke-width="1"/><path d="M4.5 9.5 H11" stroke="#333" stroke-width="1.1"/></svg>
<svg class="a" style="left:917px;top:530px;" width="13" height="13" viewBox="0 0 13 13"><circle cx="6.5" cy="6.5" r="5.6" fill="#f4f4f4" stroke="#6a6a6a" stroke-width="1"/><path d="M3.8 6.5 H9.2" stroke="#333" stroke-width="1.5"/></svg>
<div class="a" style="left:938px;top:536px;width:63px;height:1.5px;background:#d8d8d8"></div>
<svg class="a" style="left:965px;top:530px;" width="9" height="13" viewBox="0 0 9 13"><path d="M0.5 0.5 H8 V9.5 L4.25 12.5 L0.5 9.5 Z" fill="#0e6fd8"/></svg>
<svg class="a" style="left:1009px;top:530px;" width="13" height="13" viewBox="0 0 13 13"><circle cx="6.5" cy="6.5" r="5.6" fill="#f4f4f4" stroke="#6a6a6a" stroke-width="1"/><path d="M3.8 6.5 H9.2 M6.5 3.8 V9.2" stroke="#333" stroke-width="1.5"/></svg>
<div class="a" style="left:257px;top:546px;width:36px;height:30px;background:#8196c2"></div>
<div class="a" style="left:187px;top:574px;width:29px;height:2px;background:#c3cee6"></div>
<div class="a" style="left:223px;top:574px;width:30px;height:2px;background:#c3cee6"></div>
<div class="a" style="left:257px;top:574px;width:36px;height:2px;background:#c3cee6"></div>
<div class="a" style="left:297px;top:574px;width:30px;height:2px;background:#c3cee6"></div>
<div class="a" style="left:1020px;top:546px;width:1px;height:30px;background:#9fb0d0"></div>
<svg class="a" style="left:11px;top:554px;" width="14" height="14" viewBox="0 0 14 14"><path d="M0.8 2 L5.3 1.4 V6.3 H0.8 Z M6.1 1.3 L13.2 0.5 V6.3 H6.1 Z M0.8 7.1 H5.3 V12 L0.8 11.4 Z M6.1 7.1 H13.2 V12.9 L6.1 12.1 Z" fill="#fff"/></svg>
<svg class="a" style="left:47px;top:554px;" width="14" height="14" viewBox="0 0 14 14"><circle cx="9" cy="5" r="3.7" fill="none" stroke="#e8eef8" stroke-width="1.2"/><path d="M6.3 7.7 L1.2 12.6" stroke="#e8eef8" stroke-width="1.3"/></svg>
<svg class="a" style="left:81px;top:555px;" width="18" height="12" viewBox="0 0 18 12"><rect x="3.8" y="0.6" width="10.4" height="10.2" fill="none" stroke="#e8eef8" stroke-width="1.1"/><path d="M3.8 2.3 H1 V9.1 H3.8 M14.2 2.3 H17 V9.1 H14.2" fill="none" stroke="#e8eef8" stroke-width="1.1"/></svg>
<svg class="a" style="left:119px;top:553px;" width="18" height="16" viewBox="0 0 18 16"><rect x="0.7" y="1" width="8.5" height="7" fill="#f6eef0"/><circle cx="4" cy="4" r="1.5" fill="#d9534f"/><rect x="9.8" y="1" width="7" height="7" fill="#f6eef0"/><rect x="12" y="2.5" width="2" height="3" fill="#c8906a"/><rect x="5" y="8" width="8" height="7" fill="#f8f2f4"/><path d="M7.5 10.5 V12.5 M9.5 10.5 V12.5" stroke="#777" stroke-width="0.9"/></svg>
<svg class="a" style="left:156px;top:553px;" width="18" height="15" viewBox="0 0 18 15"><path d="M1 1.5 H7 L8.5 3 H17 V14 H1 Z" fill="#f9d77a"/><path d="M1 4.5 H17 V14 H1 Z" fill="#fbe08e"/><rect x="4" y="9" width="10" height="5" fill="#1d9ad6"/><rect x="7.5" y="11" width="3" height="3" fill="#f2f2f2"/></svg>
<svg class="a" style="left:192px;top:552px;" width="20" height="18" viewBox="0 0 20 18"><path d="M9.5 0.8 C15 0.8 18.5 3.5 18.5 8.5 C18.5 13.5 15 16.8 9.5 16.8 C7 16.8 5 16.3 3.5 15.3 L1.2 16.5 L2 13.5 C1 12 0.8 10.5 0.8 8.5 C0.8 3.5 4 0.8 9.5 0.8 Z" fill="#fff" stroke="#1f6fe0" stroke-width="1.2"/><text x="9.6" y="11" font-family="Liberation Sans" font-size="6.2" font-weight="bold" fill="#1f6fe0" text-anchor="middle">Zalo</text></svg>
<svg class="a" style="left:229px;top:552px;" width="18" height="18" viewBox="0 0 18 18"><ellipse cx="9" cy="9" rx="8.6" ry="8.6" fill="#e8192c"/><ellipse cx="9" cy="9" rx="3.6" ry="5.9" fill="#7088b4"/></svg>
<svg class="a" style="left:265px;top:552px;" width="22" height="22" viewBox="0 0 22 22"><ellipse cx="9.5" cy="10" rx="8" ry="6.2" fill="#dfeaf3" opacity="0.9"/><circle cx="5" cy="10" r="1.6" fill="#d9534f"/><circle cx="8" cy="6.5" r="1.5" fill="#6cc04a"/><circle cx="12" cy="6.5" r="1.5" fill="#f0c040"/><circle cx="7.5" cy="13" r="1.6" fill="#3c9ad8"/><path d="M19 1.5 L10.5 19.5" stroke="#d8a860" stroke-width="2.2"/><circle cx="18.5" cy="2.5" r="1.8" fill="#d8a860"/></svg>
<svg class="a" style="left:303px;top:553px;" width="18" height="16" viewBox="0 0 18 16"><rect x="0.5" y="0.5" width="16.5" height="15" rx="1.5" fill="#fff"/><rect x="2" y="2.5" width="13.5" height="5" fill="#d81e2a"/><rect x="3" y="8.5" width="12.5" height="5" fill="#111"/><path d="M4 3.5 H7 M9 3.5 H13 M4 6 H7 M9 6 H13" stroke="#fff" stroke-width="0.8"/><path d="M5 10 L7 12.5 M9 10 V12.5 M11 10 H14 M12.5 10 V12.5" stroke="#fff" stroke-width="0.8"/></svg>
<svg class="a" style="left:831px;top:554px;" width="13" height="13" viewBox="0 0 13 13"><circle cx="8.5" cy="3.5" r="2.1" fill="none" stroke="#e8eef8" stroke-width="1"/><path d="M5.5 9 C5.5 6.5 11.5 6.5 11.5 9" fill="none" stroke="#e8eef8" stroke-width="1"/><circle cx="4" cy="6.8" r="2.1" fill="none" stroke="#e8eef8" stroke-width="1"/><path d="M1 12.5 C1 9.8 7 9.8 7 12.5" fill="none" stroke="#e8eef8" stroke-width="1"/></svg>
<svg class="a" style="left:859px;top:557px;" width="11" height="7" viewBox="0 0 11 7"><path d="M1 5.7 L5.3 1.4 L9.6 5.7" fill="none" stroke="#e8eef8" stroke-width="1.1"/></svg>
<svg class="a" style="left:876px;top:556px;" width="13" height="9" viewBox="0 0 13 9"><rect x="3.5" y="3" width="8.5" height="5" fill="none" stroke="#e8eef8" stroke-width="1"/><rect x="4.5" y="4" width="6.5" height="3" fill="#e8eef8"/><path d="M1.5 0.5 V4.5 M0.5 1.5 H2.5" stroke="#e8eef8" stroke-width="1"/></svg>
<svg class="a" style="left:893px;top:555px;" width="14" height="11" viewBox="0 0 14 11"><path d="M1 3.5 H3 L6 1 V10 L3 7.5 H1 Z" fill="none" stroke="#e8eef8" stroke-width="1"/><path d="M8 3.5 C9 4.5 9 6.5 8 7.5 M10 2 C11.8 4 11.8 7 10 9 M12 0.8 C14.2 3.5 14.2 7.5 12 10.2" fill="none" stroke="#e8eef8" stroke-width="0.9"/></svg>
<svg class="a" style="left:992px;top:554px;" width="20" height="20" viewBox="0 0 20 20"><path d="M1 1 H13 V9.5 H6 L4 12 V9.5 H1 Z" fill="#fff"/><path d="M3 3.5 H11 M3 5.5 H11 M3 7.5 H8" stroke="#7088b4" stroke-width="0.8"/><circle cx="12.5" cy="12.5" r="5" fill="#8a9ab8" fill-opacity="0.9" stroke="#b8c4d8" stroke-width="0.8"/><path d="M12.8 10 V15" stroke="#f0f0f0" stroke-width="1.1"/></svg>
<div class="t" style="left:92.3px;top:4.88px;font-size:9.0px;color:#1a1a1a;">Untitled - Paint</div>
<div class="t" style="left:14.5px;top:22.12px;font-size:8.6px;color:#ffffff;">File</div>
<div class="t" style="left:52.5px;top:22.29px;font-size:8.4px;color:#303030;">Home</div>
<div class="t" style="left:96.8px;top:22.22px;font-size:8.6px;color:#303030;">View</div>
<div class="t" style="left:9.7px;top:68.71px;font-size:7.9px;color:#262626;">Paste</div>
<div class="t" style="left:53.0px;top:43.46px;font-size:8.2px;color:#9a9a9a;">Cut</div>
<div class="t" style="left:53.0px;top:59.94px;font-size:8.1px;color:#9a9a9a;">Copy</div>
<div class="t" style="left:20.7px;top:93.10px;font-size:8.5px;color:#5a5a5a;">Clipboard</div>
<div class="t" style="left:87.7px;top:68.61px;font-size:7.9px;color:#262626;">Select</div>
<div class="t" style="left:131.5px;top:43.54px;font-size:8.1px;color:#9a9a9a;">Crop</div>
<div class="t" style="left:131.5px;top:59.71px;font-size:7.9px;color:#262626;">Resize</div>
<div class="t" style="left:131.5px;top:76.17px;font-size:8.3px;color:#262626;">Rotate</div>
<div class="t" style="left:113.8px;top:93.34px;font-size:8.1px;color:#5a5a5a;">Image</div>
<div class="t" style="left:191.0px;top:93.43px;font-size:8.0px;color:#5a5a5a;">Tools</div>
<div class="t" style="left:236.6px;top:68.36px;font-size:8.2px;color:#262626;">Brushes</div>
<div class="t" style="left:352.0px;top:93.26px;font-size:8.2px;color:#5a5a5a;">Shapes</div>
<div class="t" style="left:414.9px;top:43.12px;font-size:8.6px;color:#9a9a9a;">Outline</div>
<div class="t" style="left:415.0px;top:59.66px;font-size:8.2px;color:#9a9a9a;">Fill</div>
<div class="t" style="left:469.6px;top:68.70px;font-size:7.8px;color:#9a9a9a;">Size</div>
<div class="t" style="left:506.5px;top:68.10px;font-size:8.5px;color:#262626;">Color</div>
<div class="t" style="left:466.6px;width:100px;text-align:center;top:77.80px;font-size:8.5px;color:#262626">1</div>
<div class="t" style="left:537.5px;top:68.10px;font-size:8.5px;color:#262626;">Color</div>
<div class="t" style="left:498.0px;width:100px;text-align:center;top:77.80px;font-size:8.5px;color:#262626">2</div>
<div class="t" style="left:618.7px;top:93.46px;font-size:8.2px;color:#5a5a5a;">Colors</div>
<div class="t" style="left:737.5px;top:68.49px;font-size:8.4px;color:#262626;">Edit</div>
<div class="t" style="left:734.0px;top:78.17px;font-size:8.3px;color:#262626;">colors</div>
<div class="t" style="left:776.4px;top:68.49px;font-size:8.4px;color:#262626;">Open</div>
<div class="t" style="left:771.0px;top:78.47px;font-size:8.3px;color:#262626;">Paint 3D</div>
<div class="t" style="left:666.9px;top:204.98px;font-size:9.0px;color:#222;">HuynhThienn</div>
<div class="t" style="left:667.0px;top:215.90px;font-size:9.1px;color:#222;">#Hoidap247</div>
<div class="t" style="left:16.9px;top:532.57px;font-size:8.3px;color:#222;">1052, 433px</div>
<div class="t" style="left:251.7px;top:532.97px;font-size:8.3px;color:#222;">4204 × 1684px</div>
<div class="t" style="left:891.2px;top:533.06px;font-size:8.2px;color:#222;">100%</div>
<div class="t" style="left:913.6px;top:557.14px;font-size:8.1px;color:#fff;">ENG</div>
<div class="t" style="left:944.5px;top:549.80px;font-size:8.5px;color:#fff;">7:59 AM</div>
<div class="t" style="left:940.5px;top:563.45px;font-size:8.8px;color:#fff;">8/21/2021</div>
</body></html>
